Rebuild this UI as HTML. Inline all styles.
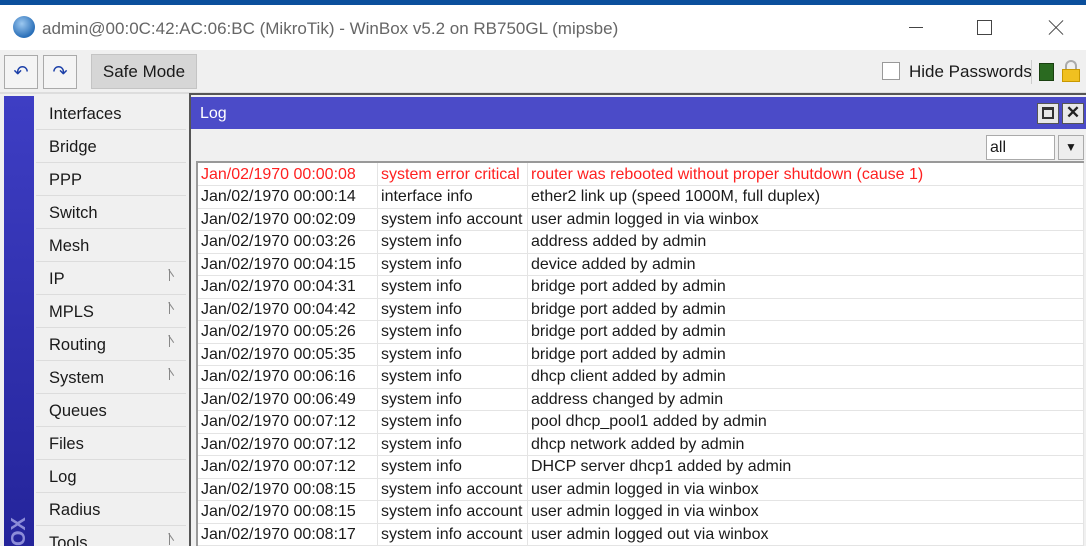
<!DOCTYPE html>
<html><head><style>
*{margin:0;padding:0;box-sizing:border-box}
html,body{width:1086px;height:546px;overflow:hidden}
body{background:#f0f0f0;font-family:"Liberation Sans",sans-serif;position:relative;color:#1a1a1a}
.abs{position:absolute}
.desk{left:0;top:0;width:1086px;height:5px;background:#0b4f9c}
.title{left:0;top:5px;width:1086px;height:45px;background:#fff;font-size:17px;color:#666}
.tb{left:0;top:50px;width:1086px;height:42px;background:#f0f0f0}
.btn{border:1px solid #aaa;background:#f4f4f4}
.menu div.it{position:absolute;left:36px;width:150px;height:33px;border-bottom:1px solid #dcdcdc;font-size:16.5px;padding:8px 0 0 13px}
.arr{position:absolute;right:10px;top:7px;width:7px;height:12px;border-left:1px solid #888}
.arr:after{content:"";position:absolute;left:-1px;top:0;width:9px;height:1px;background:#888;transform:rotate(55deg);transform-origin:0 0}
table{border-collapse:collapse;font-size:16px}
td{height:22.5px;border-bottom:1px solid #e4e4e4;border-right:1px solid #e4e4e4;padding:0 3px;white-space:nowrap;line-height:21px}
tr.r td{color:#ff2020}
</style></head><body>
<div class="abs desk"></div>
<div class="abs title">
  <div class="abs" style="left:13px;top:11px;width:22px;height:22px;border-radius:50%;background:radial-gradient(circle at 40% 35%,#9cc8f0,#2a6fb8 70%)"></div>
  <div class="abs" style="left:42px;top:14px">admin@00:0C:42:AC:06:BC (MikroTik) - WinBox v5.2 on RB750GL (mipsbe)</div>
  <div class="abs" style="left:909px;top:22px;width:14px;height:1px;background:#444"></div>
  <div class="abs" style="left:977px;top:15px;width:15px;height:15px;border:1px solid #444"></div>
  <div class="abs" style="left:1046px;top:22px;width:20px;height:1px;background:#444;transform:rotate(45deg)"></div>
  <div class="abs" style="left:1046px;top:22px;width:20px;height:1px;background:#444;transform:rotate(-45deg)"></div>
</div>
<div class="abs tb">
  <div class="abs btn" style="left:4px;top:5px;width:34px;height:34px;color:#1b3fa8;font-size:18px;text-align:center;line-height:32px">&#x21B6;</div>
  <div class="abs btn" style="left:43px;top:5px;width:34px;height:34px;color:#1b3fa8;font-size:18px;text-align:center;line-height:32px">&#x21B7;</div>
  <div class="abs" style="left:91px;top:4px;width:106px;height:35px;background:#d6d6d6;border:1px solid #c4c4c4;font-size:17px;text-align:center;line-height:33px">Safe Mode</div>
  <div class="abs" style="left:882px;top:12px;width:18px;height:18px;border:1px solid #999;background:#fff"></div>
  <div class="abs" style="left:909px;top:12px;font-size:17px">Hide Passwords</div>
  <div class="abs" style="left:1031px;top:10px;width:1px;height:24px;background:#ccc"></div>
  <div class="abs" style="left:1039px;top:13px;width:15px;height:18px;background:#2a6a20;border:1px solid #1a4010"></div>
  <div class="abs" style="left:1062px;top:10px;width:18px;height:22px">
    <div class="abs" style="left:3px;top:0;width:12px;height:12px;border:2px solid #aaa;border-radius:6px 6px 0 0;border-bottom:none"></div>
    <div class="abs" style="left:0;top:9px;width:18px;height:13px;background:#f0c020;border:1px solid #c89800"></div>
  </div>
</div>
<div class="abs" style="left:0;top:92px;width:1086px;height:2px;background:#ddd"></div>
<div class="abs" style="left:4px;top:96px;width:30px;height:450px;background:linear-gradient(#3e3ec4,#24249a)"></div>
<div class="abs" style="left:8px;color:#8c8cd8;font-size:20px;font-weight:bold;transform:rotate(-90deg);transform-origin:0 0;top:546px">OX</div>
<div class="menu">
<div class="it" style="top:97px">Interfaces</div>
<div class="it" style="top:130px">Bridge</div>
<div class="it" style="top:163px">PPP</div>
<div class="it" style="top:196px">Switch</div>
<div class="it" style="top:229px">Mesh</div>
<div class="it" style="top:262px">IP<span class="arr"></span></div>
<div class="it" style="top:295px">MPLS<span class="arr"></span></div>
<div class="it" style="top:328px">Routing<span class="arr"></span></div>
<div class="it" style="top:361px">System<span class="arr"></span></div>
<div class="it" style="top:394px">Queues</div>
<div class="it" style="top:427px">Files</div>
<div class="it" style="top:460px">Log</div>
<div class="it" style="top:493px">Radius</div>
<div class="it" style="top:526px">Tools<span class="arr"></span></div>
</div>
<div class="abs" style="left:189px;top:93px;width:897px;height:453px;border-left:2px solid #555;border-top:2px solid #555;background:#f0f0f0">
  <div class="abs" style="left:0;top:2px;width:895px;height:32px;background:#4b4bc8;color:#fff;font-size:16px;padding:8px 0 0 9px">Log
    <div class="abs" style="left:846px;top:6px;width:22px;height:21px;background:#e8e8e8;border:1px solid #555"><div class="abs" style="left:4px;top:3px;width:12px;height:12px;border:2px solid #333;border-top-width:3px"></div></div>
    <div class="abs" style="left:871px;top:6px;width:22px;height:21px;background:#e8e8e8;border:1px solid #555;color:#222;font-weight:bold;font-size:17px;text-align:center;line-height:18px">✕</div>
  </div>
  <div class="abs" style="left:795px;top:40px;width:69px;height:25px;background:#fff;border:1px solid #aaa;font-size:16px;padding:3px 0 0 3px">all</div>
  <div class="abs" style="left:867px;top:40px;width:26px;height:25px;background:#eee;border:1px solid #aaa;font-size:12px;text-align:center;line-height:22px">▼</div>
  <div class="abs" style="left:5px;top:66px;width:888px;height:400px;background:#fff;border:2px solid #999;border-right:none;border-bottom:none;overflow:hidden">
<table>
<tr class="r"><td style="width:180px">Jan/02/1970 00:00:08</td><td style="width:150px">system error critical</td><td style="width:560px">router was rebooted without proper shutdown (cause 1)</td></tr>
<tr><td>Jan/02/1970 00:00:14</td><td>interface info</td><td>ether2 link up (speed 1000M, full duplex)</td></tr>
<tr><td>Jan/02/1970 00:02:09</td><td>system info account</td><td>user admin logged in via winbox</td></tr>
<tr><td>Jan/02/1970 00:03:26</td><td>system info</td><td>address added by admin</td></tr>
<tr><td>Jan/02/1970 00:04:15</td><td>system info</td><td>device added by admin</td></tr>
<tr><td>Jan/02/1970 00:04:31</td><td>system info</td><td>bridge port added by admin</td></tr>
<tr><td>Jan/02/1970 00:04:42</td><td>system info</td><td>bridge port added by admin</td></tr>
<tr><td>Jan/02/1970 00:05:26</td><td>system info</td><td>bridge port added by admin</td></tr>
<tr><td>Jan/02/1970 00:05:35</td><td>system info</td><td>bridge port added by admin</td></tr>
<tr><td>Jan/02/1970 00:06:16</td><td>system info</td><td>dhcp client added by admin</td></tr>
<tr><td>Jan/02/1970 00:06:49</td><td>system info</td><td>address changed by admin</td></tr>
<tr><td>Jan/02/1970 00:07:12</td><td>system info</td><td>pool dhcp_pool1 added by admin</td></tr>
<tr><td>Jan/02/1970 00:07:12</td><td>system info</td><td>dhcp network added by admin</td></tr>
<tr><td>Jan/02/1970 00:07:12</td><td>system info</td><td>DHCP server dhcp1 added by admin</td></tr>
<tr><td>Jan/02/1970 00:08:15</td><td>system info account</td><td>user admin logged in via winbox</td></tr>
<tr><td>Jan/02/1970 00:08:15</td><td>system info account</td><td>user admin logged in via winbox</td></tr>
<tr><td>Jan/02/1970 00:08:17</td><td>system info account</td><td>user admin logged out via winbox</td></tr>
</table>
  </div>
</div>
</body></html>
